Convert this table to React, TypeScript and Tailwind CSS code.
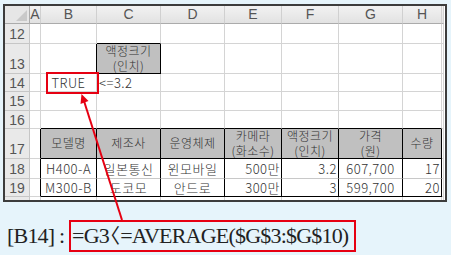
import React from 'react';

const cols = 'grid-cols-[25px_11px_56px_64px_64px_57px_57px_64px_39px_2px]';
const rowHeights = ['h-[20px]', 'h-[30px]', 'h-[18px]', 'h-[19px]', 'h-[18px]', 'h-[30px]', 'h-[20px]', 'h-[18px]', 'h-[20px]'];
const rowNums = ['12', '13', '14', '15', '16', '17', '18', '19', '20'];

const grid = 'border-r border-b border-[#d4d4d4]';
const rowHead = 'border-r border-b border-[#c6c6c6] bg-[#e9e9e9] text-[#555] flex items-center justify-center leading-none text-[14px]';

type Cell = { text?: React.ReactNode; cls?: string };

// cells for columns A..I, per row
function rowCells(r: number): Cell[] {
  const empty: Cell[] = Array.from({ length: 9 }, () => ({}));
  const tb = 'border-black';
  const head = 'bg-[#c0c0c0] flex flex-col items-center justify-center leading-[14.5px]';
  if (r === 1) {
    empty[2] = { text: <><span>액정크기</span><span>(인치)</span></>, cls: `border-r border-b ${tb} ${head}` };
    empty[1] = { cls: `border-r border-b border-r-black border-b-[#d4d4d4]` };
  }
  if (r === 0) {
    empty[2] = { cls: `border-r border-b border-[#d4d4d4] border-b-black` };
  }
  if (r === 2) {
    empty[1] = { text: 'TRUE', cls: `${grid} flex items-center justify-center text-[13px]` };
    empty[2] = { text: '<=3.2', cls: `${grid} flex items-center pl-[2px] text-[13px]` };
  }
  if (r === 4) {
    for (let c = 1; c <= 7; c++) empty[c] = { cls: 'border-r border-b border-[#d4d4d4] border-b-black' };
  }
  if (r === 5) {
    const h = ['모델명', '제조사', '운영체제', <><span>카메라</span><span>(화소수)</span></>, <><span>액정크기</span><span>(인치)</span></>, <><span>가격</span><span>(원)</span></>, '수량'];
    h.forEach((t, i) => (empty[i + 1] = { text: t, cls: `border-r border-b ${tb} ${head}` }));
  }
  if (r === 6 || r === 7) {
    const d = r === 6
      ? ['H400-A', '일본통신', '윈모바일', '500만', '3.2', '607,700', '17']
      : ['M300-B', '도코모', '안드로', '300만', '3', '599,700', '20'];
    const al = ['justify-center', 'justify-center', 'justify-center', 'justify-end pr-[1px]', 'justify-end pr-[1px]', 'justify-center', 'justify-end pr-[1px]'];
    d.forEach((t, i) => (empty[i + 1] = { text: t, cls: `border-r border-b border-black ${r === 6 ? 'border-b-[#c8c8c8]' : ''} flex items-center ${al[i]} text-[13px]` }));
  }
  if (r >= 5 && r <= 7) {
    empty[0] = { cls: 'border-r border-b border-[#d4d4d4] border-r-black' };
  }
  return empty;
}

export default function App() {
  return (
    <div className="relative w-[451px] h-[255px] overflow-hidden bg-[#e6f4fb] pt-[4px] pl-[3px]">
      <div className="w-[444px] h-[198px] overflow-hidden border-2 border-[#3c3c3c] bg-white">
        <div
          className={`grid ${cols} text-[12px] font-light tracking-[0.5px] text-[#333]`}
          style={{ fontFamily: '"Noto Sans CJK KR", sans-serif' }}
        >
          {/* column header row */}
          <div className="h-[18px] border-r border-b border-[#ababab] bg-[#e6e6e6] relative">
            <svg className="absolute right-[2px] bottom-[2px]" width="11" height="11" viewBox="0 0 11 11">
              <polygon points="11,0 11,11 0,11" fill="#c9c9c9" />
            </svg>
          </div>
          {['A', 'B', 'C', 'D', 'E', 'F', 'G', 'H', ''].map((l, i) => (
            <div
              key={i}
              className="h-[18px] border-r border-b border-[#ababab] border-r-[#d0d0d0] bg-gradient-to-b from-[#f2f2f2] to-[#e2e2e2] flex items-center justify-center text-[14px] font-normal tracking-normal text-[#555]"
              style={{ fontFamily: '"Liberation Sans", sans-serif' }}
            >
              {l}
            </div>
          ))}
          {rowNums.map((n, r) => (
            <React.Fragment key={n}>
              <div
                className={`${rowHeights[r]} ${rowHead} font-normal tracking-normal ${r === 1 || r === 5 ? 'items-end pb-[2px]' : ''}`}
                style={{ fontFamily: '"Liberation Sans", sans-serif' }}
              >
                {n}
              </div>
              {rowCells(r).map((c, i) => (
                <div key={i} className={`${rowHeights[r]} ${c.cls ?? grid} whitespace-nowrap`}>
                  {c.text}
                </div>
              ))}
            </React.Fragment>
          ))}
        </div>
      </div>

      <div
        className="mt-[18px] ml-[4px] flex items-center text-[22px] tracking-[-0.8px] text-[#222] leading-none"
        style={{ fontFamily: '"Liberation Serif", "Noto Sans CJK KR", serif' }}
      >
        <span>[B14] :&nbsp;</span>
        <span className="border-2 border-[#e60012] h-[32px] flex items-center pl-[1px] pr-[6px]">
          =G3<span className="-ml-[9px] mr-[1px] text-[20px]">〈</span>=AVERAGE($G$3:$G$10)
        </span>
      </div>

      {/* red box on B14 and arrow */}
      <div className="absolute left-[46px] top-[72px] w-[53px] h-[22px] border-2 border-[#e60012]" />
      <svg className="absolute left-0 top-0" width="451" height="255">
        <line x1="122" y1="220" x2="84" y2="101" stroke="#e60012" strokeWidth="2" />
        <polygon points="81.5,94 88.5,101 80.5,104" fill="#e60012" />
      </svg>
    </div>
  );
}
